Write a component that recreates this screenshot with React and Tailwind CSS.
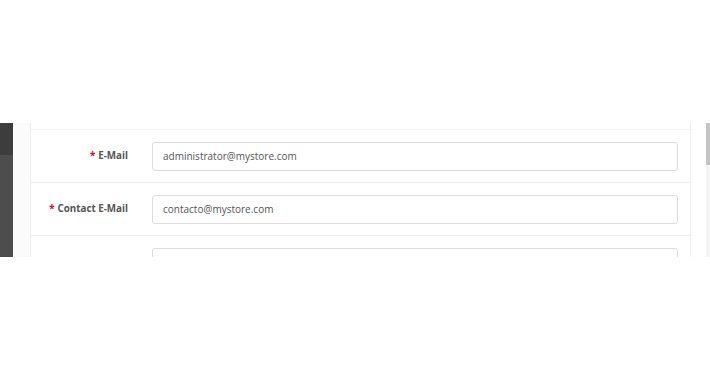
import React from "react";

const Row = ({ label, value, last }) => (
  <div className={`flex items-center h-[53px] ${last ? "" : "border-b border-[#eeeeee]"}`}>
    <div className="w-[121px] pr-[24px] text-right text-[9.8px] font-bold text-[#555] whitespace-nowrap">
      <span className="text-[#e3001b] mr-[3px]">*</span>
      {label}
    </div>
    <div className="w-[526px] h-[29px] border border-[#dcdcdc] rounded-[3px] bg-white flex items-center px-[10px] text-[10px] text-[#555]">
      {value}
    </div>
  </div>
);

export default function App() {
  return (
    <div className="w-[710px] h-[380px] bg-white overflow-hidden" style={{ fontFamily: '"Open Sans", "Liberation Sans", sans-serif' }}>
      <div className="h-[123px]" />
      <div className="flex h-[134px] overflow-hidden">
        <div className="w-[13px] flex flex-col">
          <div className="h-[32px] bg-[#3d3d3d]" />
          <div className="flex-1 bg-[#4d4d4d]" />
        </div>
        <div className="w-[17px] bg-[#fbfbfb]" />
        <div className="w-[661px] border-l border-r border-[#eeeeee] bg-white">
          <div className="h-[7px] border-b border-[#f2f2f2]" />
          <Row label="E-Mail" value="administrator@mystore.com" />
          <Row label="Contact E-Mail" value="contacto@mystore.com" />
          <div className="flex items-start pt-[12px]">
            <div className="w-[121px]" />
            <div className="w-[526px] h-[29px] border border-[#dcdcdc] rounded-[3px]" />
          </div>
        </div>
        <div className="w-[15px]" />
        <div className="w-[4px] flex flex-col bg-[#f3f3f3]">
          <div className="h-[42px] bg-[#c4c4c4]" />
        </div>
      </div>
    </div>
  );
}
